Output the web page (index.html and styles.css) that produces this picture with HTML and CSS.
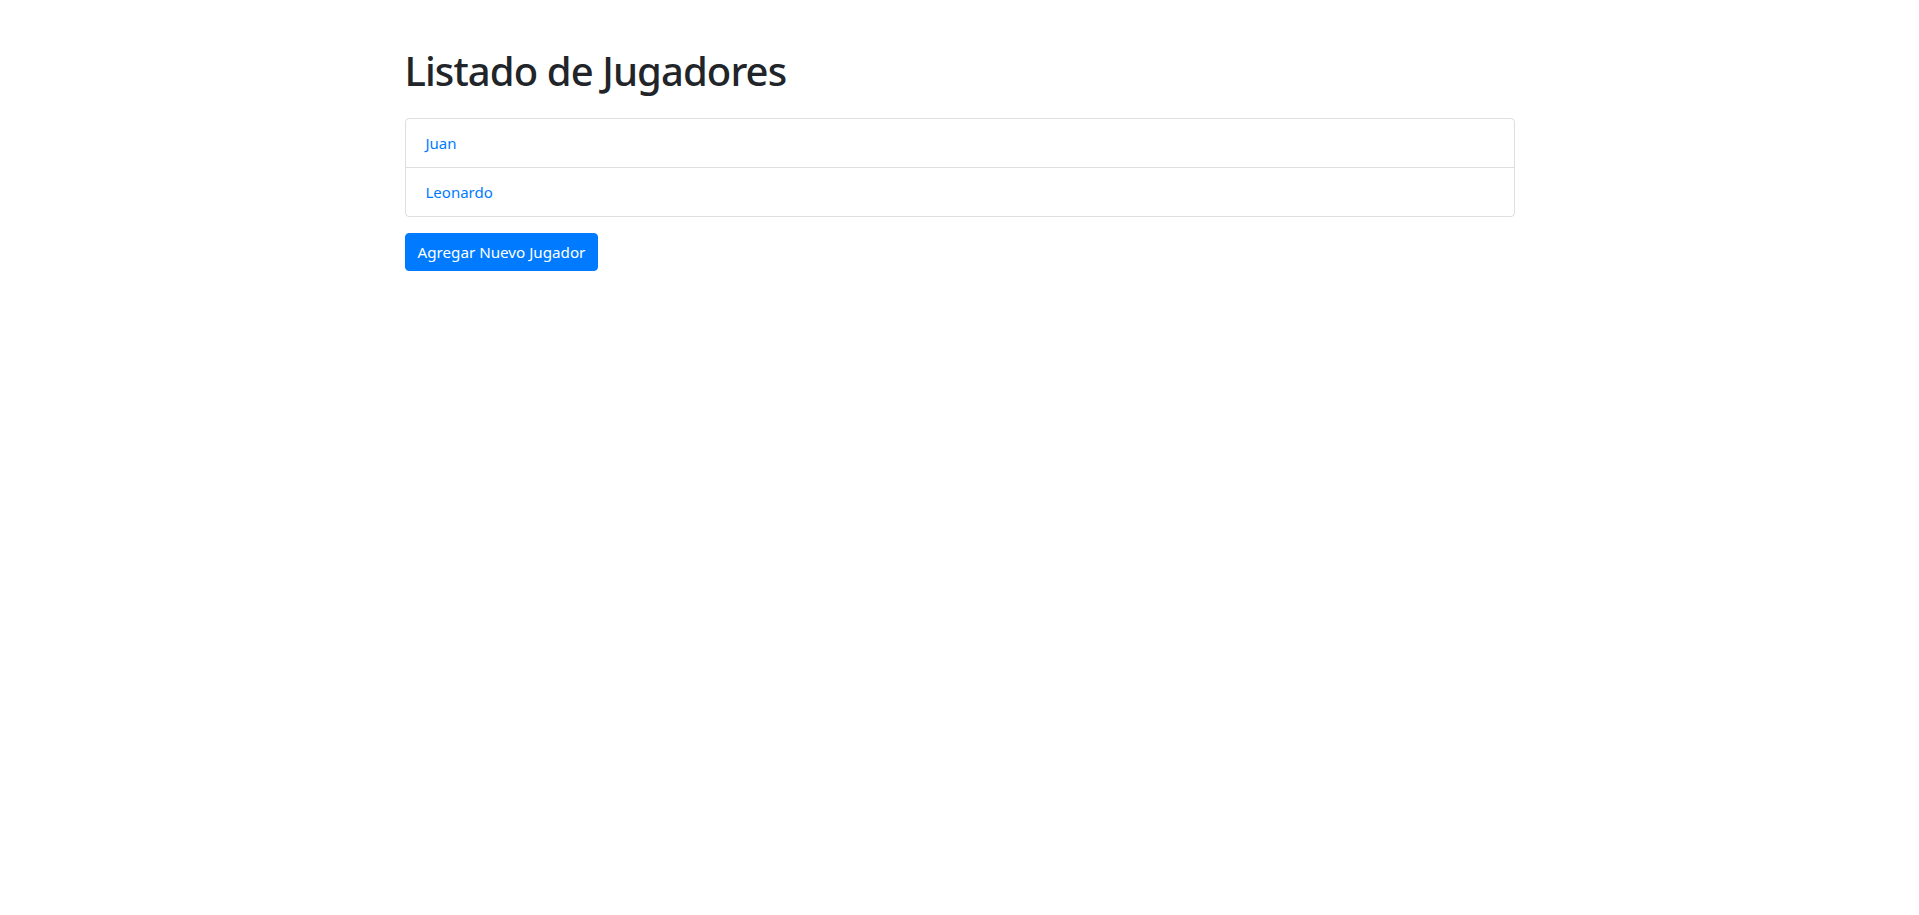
FILE: index.html
```html
<!DOCTYPE html>
<html lang="es">
<head>
<meta charset="utf-8">
<title>Listado de Jugadores</title>
<link rel="stylesheet" href="styles.css">
</head>
<body>
<div class="container">
  <h1 class="title">Listado de Jugadores</h1>
  <ul class="list-group">
    <li class="list-item"><a href="#" class="player-link">Juan</a></li>
    <li class="list-item"><a href="#" class="player-link">Leonardo</a></li>
  </ul>
  <a href="#" class="btn-primary">Agregar Nuevo Jugador</a>
</div>
</body>
</html>
```

FILE: styles.css
```css
* { box-sizing: border-box; }
html, body {
  margin: 0;
  background: #fff;
}
body {
  font-family: "Noto Sans", "Open Sans", "Liberation Sans", sans-serif;
  font-size: 16px;
  line-height: 1.5;
  color: #212529;
}
.container {
  max-width: 1140px;
  margin: 0 auto;
  padding: 47px 15px 0;
}
.title {
  margin: 0 0 23px;
  font-size: 40px;
  font-weight: 550;
  line-height: 48px;
  letter-spacing: -0.9px;
}
.list-group {
  list-style: none;
  margin: 0 0 16px;
  padding: 0;
  border: 1px solid rgba(0,0,0,.125);
  border-radius: 4px;
}
.list-item {
  padding: 12px 20px;
  font-size: 15px;
  line-height: 24px;
}
.list-item + .list-item {
  border-top: 1px solid rgba(0,0,0,.125);
}
.player-link {
  color: #007bff;
  text-decoration: none;
}
.btn-primary {
  display: inline-block;
  padding: 6px 12px;
  font-size: 15.2px;
  line-height: 24px;
  color: #fff;
  background: #007bff;
  border: 1px solid #007bff;
  border-radius: 4px;
  text-decoration: none;
}
```
